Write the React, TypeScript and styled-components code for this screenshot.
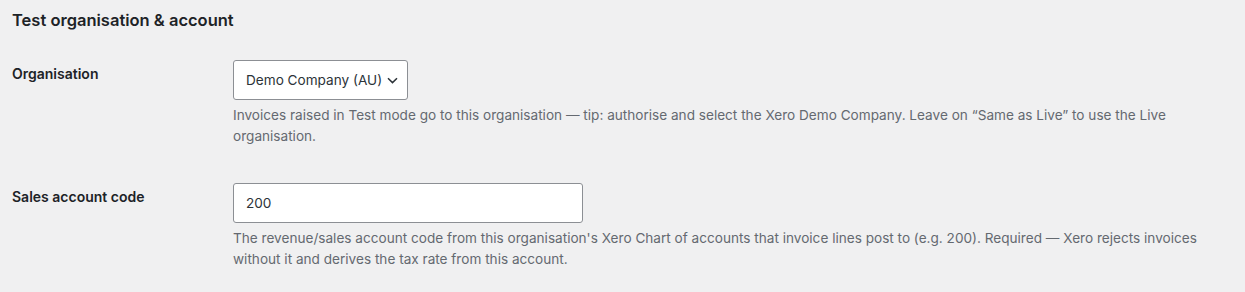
import { FC } from 'react';
import styled, { createGlobalStyle } from 'styled-components';

const GlobalStyle = createGlobalStyle`
	body {
		margin: 0;
		background: #f0f0f1;
		color: #3c434a;
		font-family: Inter, "Noto Sans", sans-serif;
	}
`;

const Page = styled.div`
	padding: 0 10px 0 12px;
`;

const Heading = styled.h2`
	margin: 8px 0 13px;
	font-size: 16.5px;
	line-height: 24px;
	font-weight: 600;
	color: #1d2327;
`;

const FormTable = styled.div`
	display: grid;
	grid-template-columns: 221px 1fr;
`;

const Label = styled.div<{ $last?: boolean }>`
	padding: 20px 10px 0 0;
	font-size: 14px;
	line-height: 18px;
	font-weight: 600;
	color: #1d2327;
	padding-bottom: ${(p) => (p.$last ? '0' : '21px')};
`;

const Field = styled.div<{ $last?: boolean }>`
	padding-top: 15px;
	padding-bottom: ${(p) => (p.$last ? '0' : '21px')};
`;

const SelectBox = styled.div`
	display: inline-flex;
	align-items: center;
	gap: 5px;
	box-sizing: border-box;
	height: 40px;
	padding: 0 9px 0 12px;
	background: #fff;
	border: 1px solid #8c8f94;
	border-radius: 3px;
	font-size: 13.6px;
	color: #2c3338;
`;

const TextInput = styled.input`
	box-sizing: border-box;
	width: 350px;
	height: 40px;
	padding: 0 12px;
	background: #fff;
	border: 1px solid #8c8f94;
	border-radius: 3px;
	font-family: inherit;
	font-size: 13.6px;
	color: #2c3338;
	outline: none;
`;

const Description = styled.p`
	margin: 5px 0 0;
	font-size: 13.6px;
	line-height: 21px;
	color: #646970;
`;

const Chevron: FC = () => (
	<svg width="11" height="7" viewBox="0 0 11 7" fill="none">
		<path d="M1 1.2 L5.5 5.6 L10 1.2" stroke="#2c3338" strokeWidth="1.5" />
	</svg>
);

export default function App() {
	return (
		<>
			<GlobalStyle />
			<Page>
				<Heading>Test organisation &amp; account</Heading>
				<FormTable>
					<Label>Organisation</Label>
					<Field>
						<SelectBox>
							Demo Company (AU)
							<Chevron />
						</SelectBox>
						<Description>
							Invoices raised in Test mode go to this organisation — tip: authorise and select the Xero Demo
							Company. Leave on “Same as Live” to use the Live organisation.
						</Description>
					</Field>
					<Label $last>Sales account code</Label>
					<Field $last>
						<TextInput defaultValue="200" />
						<Description>
							The revenue/sales account code from this organisation's Xero Chart of accounts that invoice lines
							post to (e.g. 200). Required — Xero rejects invoices without it and derives the tax rate from this
							account.
						</Description>
					</Field>
				</FormTable>
			</Page>
		</>
	);
}
